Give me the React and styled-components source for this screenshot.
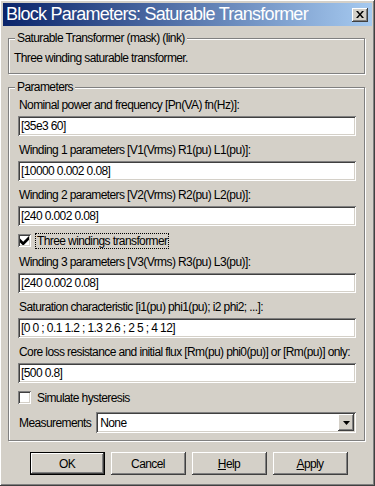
import styled, { createGlobalStyle } from "styled-components";

const GlobalStyle = createGlobalStyle`
	body {
		margin: 0;
		background: #d4d0c8;
	}
	* {
		box-sizing: border-box;
	}
`;

const raised = `
	box-shadow: inset -1px -1px #404040, inset 1px 1px #ffffff, inset -2px -2px #808080, inset 2px 2px #d4d0c8;
`;

const sunken = `
	box-shadow: inset 1px 1px #808080, inset -1px -1px #ffffff, inset 2px 2px #404040, inset -2px -2px #d4d0c8;
`;

const Window = styled.div`
	width: 375px;
	height: 486px;
	padding: 3px;
	display: flex;
	flex-direction: column;
	background: #d4d0c8;
	font-family: "Liberation Sans", Arial, sans-serif;
	font-size: 12px;
	letter-spacing: -0.6px;
	color: #000;
	${raised}
`;

const TitleBar = styled.div`
	height: 23px;
	display: flex;
	align-items: center;
	justify-content: space-between;
	padding: 0 4px 0 3px;
	background: linear-gradient(to right, #0a246a, #a6caf0);
`;

const Title = styled.span`
	color: #fff;
	font-size: 18px;
	letter-spacing: -0.75px;
	white-space: nowrap;
`;

const CloseButton = styled.div`
	width: 16px;
	height: 14px;
	display: flex;
	align-items: center;
	justify-content: center;
	background: #d4d0c8;
	${raised}
`;

const Body = styled.div`
	padding: 0 0 0 5px;
	display: flex;
	flex-direction: column;
`;

const Group = styled.div`
	position: relative;
	width: 357px;
	margin-top: ${(p) => p.$top}px;
	padding: ${(p) => p.$pad};
	border: 1px solid #808080;
	box-shadow: inset 1px 1px #fff, 1px 1px #fff;
	display: flex;
	flex-direction: column;
`;

const Legend = styled.span`
	position: absolute;
	top: -8px;
	left: 6px;
	padding: 0 2px;
	line-height: 14px;
	background: #d4d0c8;
`;

const Description = styled.div`
	line-height: 14px;
`;

const Field = styled.div`
	display: flex;
	flex-direction: column;
	gap: 4px;
	margin-bottom: 7px;
`;

const Label = styled.label`
	line-height: 14px;
	padding-left: 1px;
	white-space: nowrap;
`;

const TextBox = styled.input`
	width: 338px;
	height: 20px;
	border: none;
	outline: none;
	padding: 0 3px;
	background: #fff;
	font-family: inherit;
	font-size: 12px;
	letter-spacing: -0.6px;
	color: #000;
	${sunken}
`;

const CheckRow = styled.div`
	height: 15px;
	display: flex;
	align-items: center;
	gap: 5px;
	margin-bottom: 7px;
`;

const CheckBox = styled.div`
	width: 13px;
	height: 13px;
	display: flex;
	align-items: center;
	justify-content: center;
	background: #fff;
	${sunken}
`;

const CheckLabel = styled.span`
	line-height: 14px;
	padding: 0 1px;
	outline: ${(p) => (p.$focused ? "1px dotted #000" : "none")};
`;

const SelectRow = styled.div`
	display: flex;
	align-items: center;
	gap: 5px;
`;

const SelectBox = styled.div`
	flex: 1;
	height: 21px;
	display: flex;
	align-items: center;
	justify-content: space-between;
	padding: 2px 2px 2px 4px;
	background: #fff;
	${sunken}
`;

const DropButton = styled.div`
	width: 16px;
	height: 17px;
	display: flex;
	align-items: center;
	justify-content: center;
	background: #d4d0c8;
	${raised}
`;

const ButtonRow = styled.div`
	display: flex;
	justify-content: center;
	gap: 6px;
	margin-top: 11px;
	padding-right: 3px;
`;

const Button = styled.button`
	width: 75px;
	height: 23px;
	border: none;
	padding: 0;
	background: #d4d0c8;
	font-family: inherit;
	font-size: 12px;
	letter-spacing: -0.6px;
	color: #000;
	box-shadow: ${(p) =>
		p.$default
			? "inset 0 0 0 1px #000, inset -2px -2px #404040, inset 2px 2px #fff, inset -3px -3px #808080"
			: "inset -1px -1px #404040, inset 1px 1px #fff, inset -2px -2px #808080, inset 2px 2px #d4d0c8"};
`;

const Check = () => (
	<svg width="9" height="9" viewBox="0 0 7 7">
		<path d="M0 2v3l2 2h1l4-4V0L2.5 4.5z" fill="#000" />
	</svg>
);

const fields = [
	["Nominal power and frequency [Pn(VA) fn(Hz)]:", "[35e3 60]"],
	["Winding 1 parameters [V1(Vrms) R1(pu) L1(pu)]:", "[10000 0.002 0.08]"],
	["Winding 2 parameters [V2(Vrms) R2(pu) L2(pu)]:", "[240 0.002 0.08]"],
];

const fields2 = [
	["Winding 3 parameters [V3(Vrms) R3(pu) L3(pu)]:", "[240 0.002 0.08]"],
	["Saturation characteristic [i1(pu) phi1(pu); i2 phi2; ...]:", "[0 0 ; 0.1 1.2 ; 1.3 2.6 ; 2 5 ; 4 12]"],
	["Core loss resistance and initial flux [Rm(pu) phi0(pu)] or [Rm(pu)] only:", "[500 0.8]"],
];

function ParamField({ label, value }) {
	return (
		<Field>
			<Label>{label}</Label>
			<TextBox readOnly value={value} />
		</Field>
	);
}

export default function App() {
	return (
		<>
			<GlobalStyle />
			<Window>
				<TitleBar>
					<Title>Block Parameters: Saturable Transformer</Title>
					<CloseButton>
						<svg width="8" height="7" viewBox="0 0 8 7">
							<path d="M0 0h2l2 2.5L6 0h2L5 3.5 8 7H6L4 4.5 2 7H0l3-3.5z" fill="#000" />
						</svg>
					</CloseButton>
				</TitleBar>
				<Body>
					<Group $top={12} $pad="12px 5px 8px 5px">
						<Legend>Saturable Transformer (mask) (link)</Legend>
						<Description>Three winding saturable transformer.</Description>
					</Group>
					<Group $top={13} $pad="10px 8px 7px 9px">
						<Legend>Parameters</Legend>
						{fields.map(([l, v]) => (
							<ParamField key={l} label={l} value={v} />
						))}
						<CheckRow>
							<CheckBox>
								<Check />
							</CheckBox>
							<CheckLabel $focused>Three windings transformer</CheckLabel>
						</CheckRow>
						{fields2.map(([l, v]) => (
							<ParamField key={l} label={l} value={v} />
						))}
						<CheckRow>
							<CheckBox />
							<CheckLabel>Simulate hysteresis</CheckLabel>
						</CheckRow>
						<SelectRow>
							<Label>Measurements</Label>
							<SelectBox>
								<span>None</span>
								<DropButton>
									<svg width="7" height="4" viewBox="0 0 7 4">
										<path d="M0 0h7L3.5 4z" fill="#000" />
									</svg>
								</DropButton>
							</SelectBox>
						</SelectRow>
					</Group>
					<ButtonRow>
						<Button $default>OK</Button>
						<Button>Cancel</Button>
						<Button>
							<u>H</u>elp
						</Button>
						<Button>
							<u>A</u>pply
						</Button>
					</ButtonRow>
				</Body>
			</Window>
		</>
	);
}
